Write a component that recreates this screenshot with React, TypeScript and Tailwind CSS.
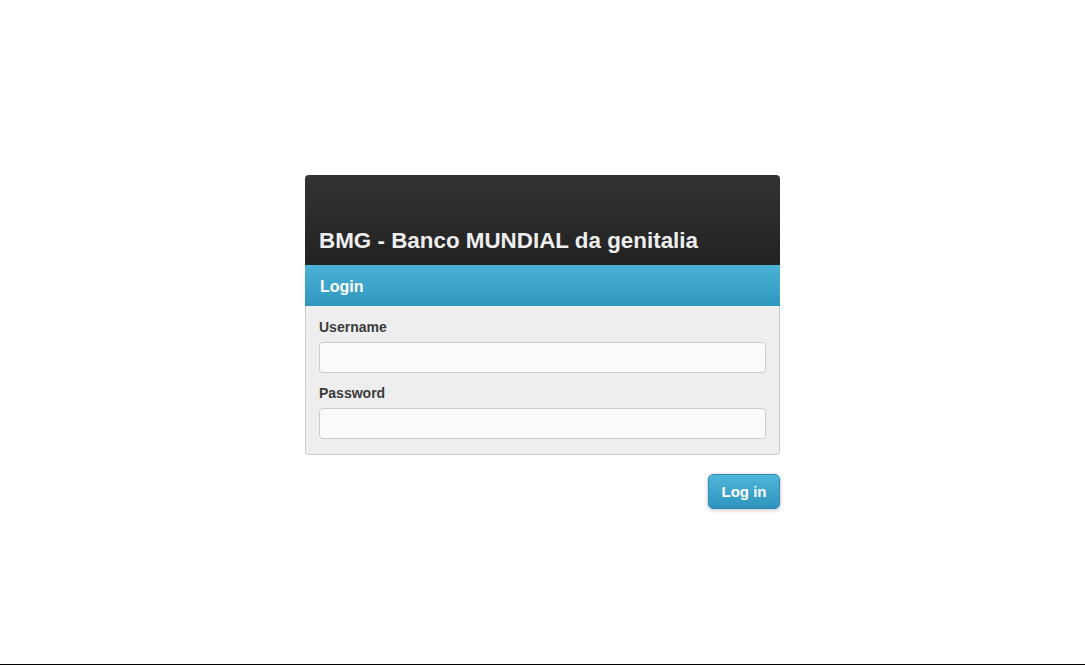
export default function App() {
  return (
    <div
      className="h-[665px] border-b border-black bg-white"
      style={{ fontFamily: '"Liberation Sans", Arial, sans-serif' }}
    >
      <div className="mx-auto w-[475px] pt-[175px]">
        <div className="overflow-hidden rounded-t-[4px] bg-gradient-to-b from-[#333333] to-[#222222] px-[14px] pb-[10px] pt-[52px]">
          <h1 className="text-[22.4px] font-bold leading-[28px] text-[#eeeeee]">
            BMG - Banco MUNDIAL da genitalia
          </h1>
        </div>
        <div className="flex h-[41px] items-center bg-gradient-to-b from-[#4bb2d6] to-[#2f96bf] px-[15px] pt-[2px]">
          <span className="text-[16px] font-bold text-white">Login</span>
        </div>
        <div className="rounded-b-[4px] border border-t-0 border-[#cccccc] bg-[#eeeeee] px-[13px] pb-[15px] pt-[11px]">
          <label className="block text-[14px] font-bold leading-[20px] text-[#3a3a3a]">
            Username
          </label>
          <input
            type="text"
            className="mt-[5px] block h-[31px] w-full rounded-[4px] border border-[#cccccc] bg-[#fbfbfb] px-2 outline-none"
          />
          <label className="mt-[10px] block text-[14px] font-bold leading-[20px] text-[#3a3a3a]">
            Password
          </label>
          <input
            type="password"
            className="mt-[5px] block h-[31px] w-full rounded-[4px] border border-[#cccccc] bg-[#fbfbfb] px-2 outline-none"
          />
        </div>
        <div className="mt-[19px] flex justify-end">
          <button className="h-[35px] w-[72px] rounded-[5px] border border-[#2a8ab3] bg-gradient-to-b from-[#4fb5d9] to-[#2f95be] pt-[2px] text-[15px] font-bold text-white shadow-[0_1px_4px_rgba(0,0,0,0.25)]">
            Log in
          </button>
        </div>
      </div>
    </div>
  );
}
